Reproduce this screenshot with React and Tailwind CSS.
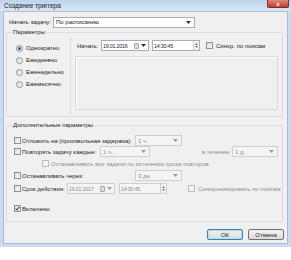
import React from "react";

function Arrow({ disabled }) {
  return (
    <svg width="5" height="3" viewBox="0 0 5 3" className="shrink-0">
      <path d="M0 0H5L2.5 3Z" fill={disabled ? "#9a9a9a" : "#333"} />
    </svg>
  );
}

function Checkbox({ checked, disabled, className = "" }) {
  return (
    <div
      className={`w-[7px] h-[7px] shrink-0 border flex items-center justify-center ${
        disabled
          ? "border-[#bdbdbd] bg-[#f4f4f4]"
          : "border-[#8e8f8f] bg-gradient-to-br from-[#dedede] to-[#f7f7f7]"
      } ${className}`}
    >
      {checked && (
        <svg width="5" height="5" viewBox="0 0 5 5">
          <path d="M0.6 2.6L2 4L4.4 0.8" stroke="#2a4f8f" strokeWidth="1.1" fill="none" />
        </svg>
      )}
    </div>
  );
}

function Radio({ checked }) {
  return (
    <div className="w-[7px] h-[7px] shrink-0 rounded-full border border-[#8e8f8f] bg-gradient-to-br from-[#dcdcdc] to-[#f8f8f8] flex items-center justify-center">
      {checked && <div className="w-[3px] h-[3px] rounded-full bg-[#1d5aa8]" />}
    </div>
  );
}

function Select({ value, width, disabled }) {
  return (
    <div
      className={`${width} h-[11px] shrink-0 border flex items-center justify-between pl-[2px] pr-[3px] ${
        disabled
          ? "border-[#cfcfcf] bg-[#f4f4f4] text-[#8d8d8d]"
          : "border-[#acacac] bg-white text-[#1e1e1e]"
      }`}
    >
      <span>{value}</span>
      <Arrow disabled={disabled} />
    </div>
  );
}

function DateField({ value, disabled }) {
  return (
    <div
      className={`w-[48px] h-[11px] shrink-0 border flex items-center pl-[1px] pr-[2px] ${
        disabled ? "border-[#cfcfcf] bg-[#f4f4f4] text-[#8d8d8d]" : "border-[#acacac] bg-white"
      }`}
    >
      <span className="flex-1 text-[5.4px] tracking-[-0.25px] whitespace-nowrap overflow-hidden">{value}</span>
      <div className="w-[5px] h-[6px] shrink-0 rounded-[1px] border border-[#a9a9a9] bg-[#dcdcdc] mr-[2px]" />
      <Arrow disabled={disabled} />
    </div>
  );
}

function TimeField({ value, disabled }) {
  return (
    <div
      className={`w-[48px] h-[11px] shrink-0 border flex items-center pl-[1px] ${
        disabled ? "border-[#cfcfcf] bg-[#f4f4f4] text-[#8d8d8d]" : "border-[#acacac] bg-white"
      }`}
    >
      <span className="flex-1 text-[5.4px] tracking-[-0.25px] whitespace-nowrap">{value}</span>
      <div className="w-[6px] h-full border-l border-[#cfcfcf] flex flex-col items-center justify-center gap-[1px] bg-[#f2f2f2]">
        <svg width="3" height="2" viewBox="0 0 3 2"><path d="M0 2H3L1.5 0Z" fill="#6a7d98" /></svg>
        <svg width="3" height="2" viewBox="0 0 3 2"><path d="M0 0H3L1.5 2Z" fill="#6a7d98" /></svg>
      </div>
    </div>
  );
}

function Button({ children, primary }) {
  return (
    <div
      className={`w-[36px] h-[11px] flex items-center justify-center rounded-[2px] border bg-gradient-to-b from-[#f2f2f2] to-[#dcdcdc] ${
        primary ? "border-[#3c7fb1] shadow-[inset_0_0_0_1px_#b2def5]" : "border-[#707070]"
      }`}
    >
      {children}
    </div>
  );
}

export default function App() {
  return (
    <div className="w-[291px] h-[260px] bg-white font-['Liberation_Sans',Arial,sans-serif] text-[6px] leading-[8px] text-[#1e1e1e] overflow-hidden">
      <div className="w-[291px] h-[247px] flex flex-col bg-[#c9dcf0]">
        {/* Title bar */}
        <div className="h-[11px] shrink-0 flex items-start justify-between bg-gradient-to-b from-[#bcd3ec] to-[#d9e7f5]">
          <span className="ml-[4px] mt-[2px] text-[6.5px] text-[#1a1a1a]">Создание триггера</span>
          <div className="w-[22px] h-[8px] mr-[2px] rounded-b-[2px] border border-t-0 border-[#7a2f2a] bg-gradient-to-b from-[#e0877a] to-[#c13a2c] flex items-center justify-center text-white text-[6px] font-bold leading-none">
            x
          </div>
        </div>

        {/* Body */}
        <div className="flex-1 mx-[3px] mb-[3px] bg-[#f0f0f0] border border-[#a6bbd4] flex flex-col">
          <div className="flex items-center h-[12px] mt-[4px] pl-[5px]">
            <span className="w-[44px]">Начать задачу:</span>
            <Select value="По расписанию" width="w-[142px]" />
          </div>

          {/* Parameters group */}
          <div className="mt-[4px] ml-[2px] w-[277px] h-[85px] border border-[#d5dfe5] rounded-[2px] flex flex-col">
            <div className="-mt-[5px] ml-[5px] px-[1px] w-fit bg-[#f0f0f0]">Параметры</div>
            <div className="flex flex-1">
              <div className="w-[63px] pt-[6px] pl-[9px] flex flex-col">
                {["Однократно", "Ежедневно", "Еженедельно", "Ежемесячно"].map((t, i) => (
                  <div key={t} className="h-[12px] flex items-center gap-[3px]">
                    <Radio checked={i === 0} />
                    <span>{t}</span>
                  </div>
                ))}
              </div>
              <div className="flex-1 border-l border-[#d5dfe5] mt-[1px] mb-[1px] flex flex-col pl-[4px]">
                <div className="flex items-center h-[11px] mt-[3px] pl-[2px]">
                  <span className="w-[24px]">Начать:</span>
                  <DateField value="19.01.2016" />
                  <div className="w-[3px]" />
                  <TimeField value="14:30:45" />
                  <Checkbox className="ml-[6px]" />
                  <span className="ml-[3px]">Синхр. по поясам</span>
                </div>
                <div className="mt-[5px] w-[203px] h-[54px] border border-[#d9d9d9] shadow-[inset_1px_1px_0_#fff]" />
              </div>
            </div>
          </div>

          {/* Additional parameters group */}
          <div className="mt-[8px] ml-[2px] w-[277px] border border-[#d5dfe5] rounded-[2px] flex flex-col pb-[7px]">
            <div className="-mt-[5px] ml-[5px] px-[1px] w-fit bg-[#f0f0f0]">Дополнительные параметры</div>
            <div className="pl-[7px] flex flex-col">
              <div className="flex items-center h-[11px] mt-[6px]">
                <Checkbox />
                <span className="ml-[1px] w-[113px]">Отложить на (произвольная задержка):</span>
                <Select value="1 ч." width="w-[47px]" disabled />
              </div>
              <div className="flex items-center h-[11px]">
                <Checkbox />
                <span className="ml-[1px] w-[78px]">Повторять задачу каждые:</span>
                <Select value="1 ч." width="w-[50px]" disabled />
                <span className="ml-[52px] w-[30px] text-[#8d8d8d]">в течение:</span>
                <Select value="1 д." width="w-[46px]" disabled />
              </div>
              <div className="flex items-center h-[11px] mt-[1px] pl-[28px]">
                <Checkbox disabled />
                <span className="ml-[2px] text-[#8d8d8d]">
                  Останавливать все задачи по истечении срока повторов
                </span>
              </div>
              <div className="flex items-center h-[11px] mt-[1px]">
                <Checkbox />
                <span className="ml-[1px] w-[113px]">Останавливать через:</span>
                <Select value="3 дн." width="w-[47px]" disabled />
              </div>
              <div className="flex items-center h-[11px] mt-[2px]">
                <Checkbox />
                <span className="ml-[1px] w-[45px]">Срок действия:</span>
                <DateField value="19.01.2017" disabled />
                <div className="w-[4px]" />
                <TimeField value="14:30:45" disabled />
                <Checkbox disabled className="ml-[21px]" />
                <span className="ml-[3px] text-[#8d8d8d]">Синхронизировать по поясам</span>
              </div>
              <div className="flex items-center h-[11px] mt-[9px]">
                <Checkbox checked />
                <span className="ml-[1px]">Включено</span>
              </div>
            </div>
          </div>

          {/* Buttons */}
          <div className="flex justify-end gap-[5px] mt-[7px] pr-[3px]">
            <Button primary>ОК</Button>
            <Button>Отмена</Button>
          </div>
        </div>
      </div>
    </div>
  );
}
